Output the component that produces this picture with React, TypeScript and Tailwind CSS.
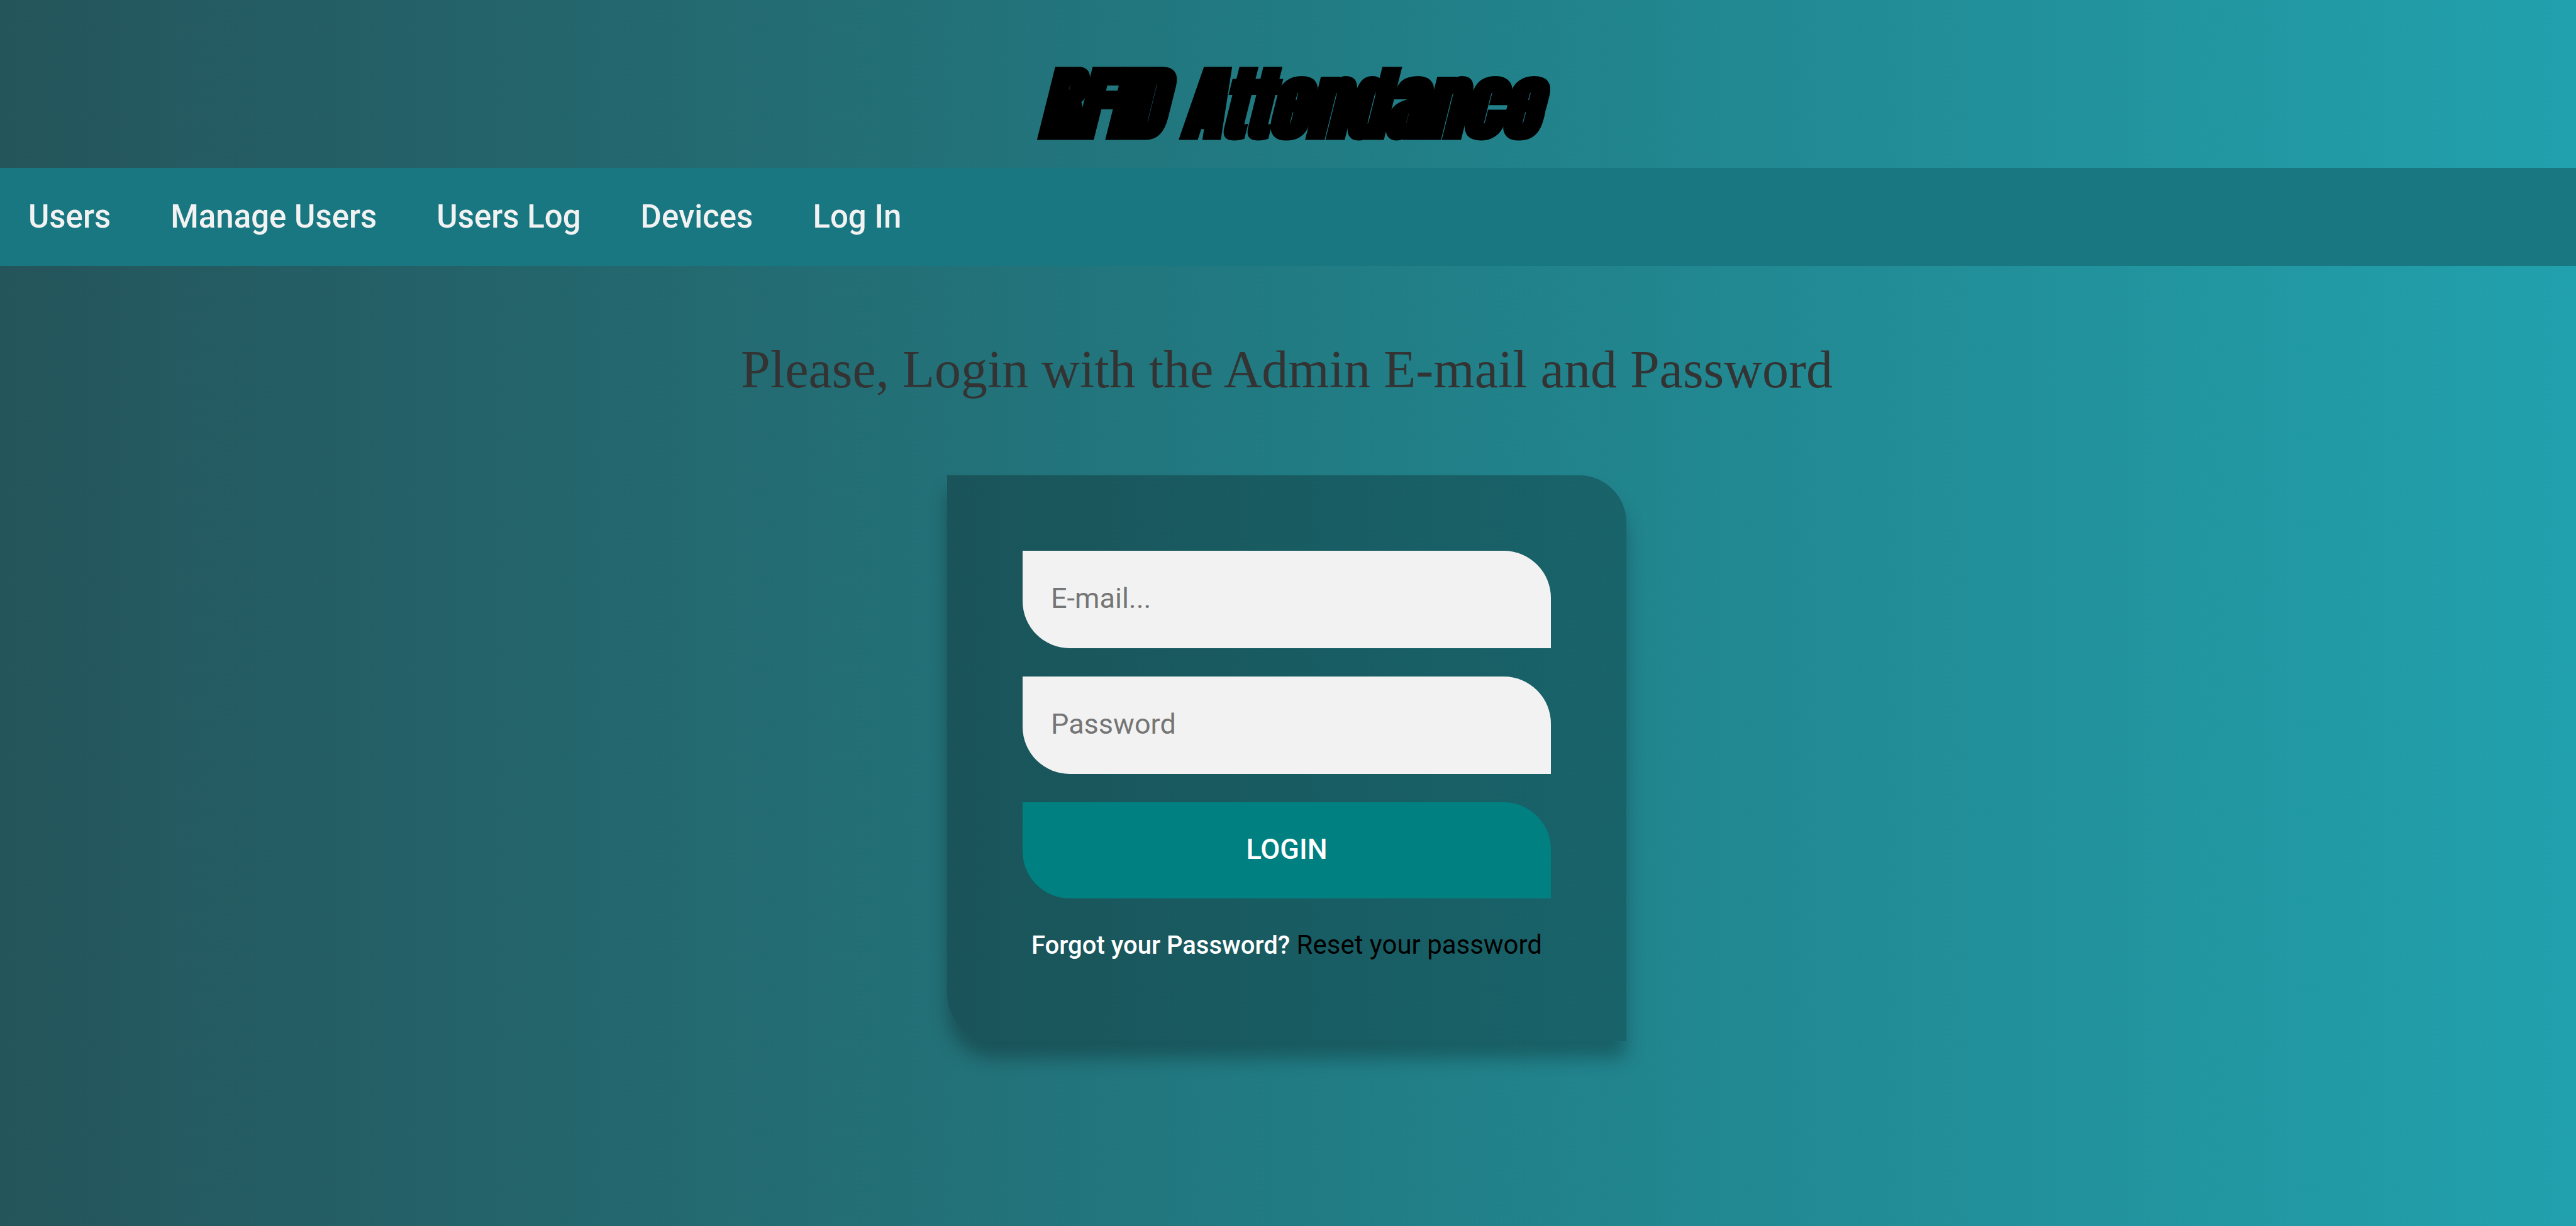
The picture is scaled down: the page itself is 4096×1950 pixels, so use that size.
const links = ["Users", "Manage Users", "Users Log", "Devices", "Log In"];

const field =
  "block h-[155px] w-full rounded-tr-[75px] rounded-bl-[75px] bg-[#f2f2f2] px-[45px] pb-1 text-[45px] text-[#222] outline-none placeholder:text-[#757575]";

export default function App() {
  return (
    <div className="min-h-screen bg-linear-to-r from-[#24555b] via-[#217b83] to-[#21a1ad] font-['Roboto','Liberation_Sans',sans-serif]">
      <header>
        <h1 className="pt-[90px] pb-[27px] text-center font-['Impact','Anton','Roboto_Condensed','Open_Sans_Condensed','Noto_Sans_Condensed','DejaVu_Sans_Condensed',sans-serif] text-[125px] leading-[150px] font-black text-black italic [-webkit-text-stroke:5px_black]">
          RFID Attendance
        </h1>
        <nav className="flex h-[156px] items-center gap-[95px] bg-[#187780] px-[45px]">
          {links.map((label) => (
            <a key={label} href="#" className="text-[51px] leading-[60px] font-medium text-[#f2f2f2]">
              {label}
            </a>
          ))}
        </nav>
      </header>
      <main className="flex flex-col items-center pr-1">
        <h2 className="mt-[117px] text-center font-['Liberation_Serif',serif] text-[84px] leading-[96px] text-[#333]">
          Please, Login with the Admin E-mail and Password
        </h2>
        <form
          onSubmit={(e) => e.preventDefault()}
          className="mt-[120px] w-full max-w-[1080px] rounded-tr-[75px] rounded-bl-[75px] bg-black/25 px-[120px] pt-[120px] pb-[120px] shadow-[0_27px_30px_0_rgba(0,0,0,0.28)]"
        >
          <div className="flex flex-col gap-[45px]">
            <input type="email" aria-label="E-mail" placeholder="E-mail..." className={field} />
            <input type="password" aria-label="Password" placeholder="Password" className={field} />
            <button
              type="submit"
              className="h-[153px] w-full rounded-tr-[75px] rounded-bl-[75px] bg-[#008080] pb-1 text-[45px] font-medium text-white"
            >
              LOGIN
            </button>
          </div>
          <p className="mt-[42px] text-center text-[42px] leading-[64px] whitespace-nowrap text-white">
            <span className="text-[40px] font-medium">Forgot your Password?</span>{" "}
            <a href="#" className="text-black">
              Reset your password
            </a>
          </p>
        </form>
      </main>
    </div>
  );
}
